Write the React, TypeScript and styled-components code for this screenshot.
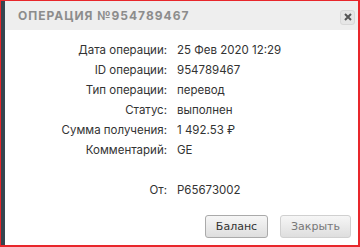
import React from "react";
import styled, { createGlobalStyle } from "styled-components";

const Global = createGlobalStyle`
  html, body { margin: 0; padding: 0; background: #fff; }
  body { font-family: Inter, "Noto Sans", sans-serif; }
`;

const Frame = styled.div`
  width: 360px;
  height: 247px;
  box-sizing: border-box;
  border-style: solid;
  border-color: #e8262b;
  border-width: 1px 2px 2px 1px;
  display: flex;
  overflow: hidden;
`;

const Backdrop = styled.div`
  width: 4px;
  flex: none;
  background: #36454f;
`;

const Dialog = styled.div`
  flex: 1;
  display: flex;
  flex-direction: column;
  background: #fff;
`;

const Header = styled.div`
  height: 29px;
  flex: none;
  background: #eeeeee;
  display: flex;
  align-items: center;
  justify-content: space-between;
  padding: 0 3px 0 13px;
`;

const Title = styled.div`
  font-family: Inter, "Noto Sans", sans-serif;
  font-weight: 700;
  font-size: 12px;
  letter-spacing: 1px;
  color: #8c8c8c;
  text-transform: uppercase;
`;

const CloseBtn = styled.div`
  width: 13px;
  height: 13px;
  border: 1px solid #d8d8d8;
  border-radius: 3px;
  background: #e6e6e6;
  display: flex;
  align-items: center;
  justify-content: center;
  margin-top: 3px;
`;

const Body = styled.div`
  padding-top: 10px;
  display: grid;
  grid-template-columns: 162px 1fr;
  column-gap: 10px;
  grid-auto-rows: 20px;
`;

const Label = styled.div`
  text-align: right;
  font-size: 11.5px;
  line-height: 20px;
  color: #333;
`;

const Value = styled.div`
  font-size: 11.5px;
  line-height: 20px;
  color: #333;
`;

const Spacer = styled.div`
  grid-column: 1 / span 2;
  height: 19px;
`;

const Footer = styled.div`
  margin-top: auto;
  display: flex;
  justify-content: flex-end;
  gap: 12px;
  padding: 0 7px 7px 0;
`;

const Button = styled.button<{ $muted?: boolean }>`
  height: 23px;
  width: ${(p) => (p.$muted ? "71px" : "63px")};
  border: 1px solid ${(p) => (p.$muted ? "#d0d0d0" : "#aaaaaa")};
  border-radius: 3px;
  background: linear-gradient(#f6f6f6, #dedede);
  font-family: "DejaVu Sans", Verdana, sans-serif;
  font-size: 11px;
  color: ${(p) => (p.$muted ? "#777" : "#333")};
  padding: 0;
`;

const rows: [string, string][] = [
  ["Дата операции:", "25 Фев 2020 12:29"],
  ["ID операции:", "954789467"],
  ["Тип операции:", "перевод"],
  ["Статус:", "выполнен"],
  ["Сумма получения:", "1 492.53 ₽"],
  ["Комментарий:", "GE"],
];

export default function App() {
  return (
    <>
      <Global />
      <Frame>
        <Backdrop />
        <Dialog>
          <Header>
            <Title>Операция №954789467</Title>
            <CloseBtn>
              <svg width="8" height="8" viewBox="0 0 8 8">
                <path d="M1 1L7 7M7 1L1 7" stroke="#555" strokeWidth="2" />
              </svg>
            </CloseBtn>
          </Header>
          <Body>
            {rows.map(([l, v]) => (
              <React.Fragment key={l}>
                <Label>{l}</Label>
                <Value>{v}</Value>
              </React.Fragment>
            ))}
            <Spacer />
            <Label>От:</Label>
            <Value>P65673002</Value>
          </Body>
          <Footer>
            <Button>Баланс</Button>
            <Button $muted>Закрыть</Button>
          </Footer>
        </Dialog>
      </Frame>
    </>
  );
}
